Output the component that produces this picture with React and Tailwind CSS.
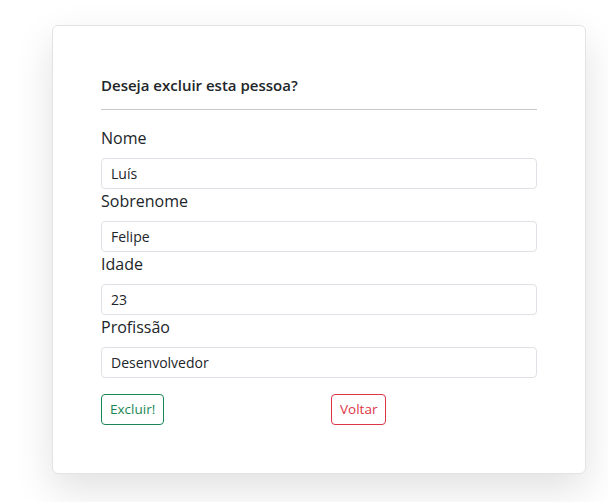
const fields = [
  { label: 'Nome', value: 'Luís' },
  { label: 'Sobrenome', value: 'Felipe' },
  { label: 'Idade', value: '23' },
  { label: 'Profissão', value: 'Desenvolvedor' },
];

export default function App() {
  return (
    <div className="min-h-[502px] bg-white pt-[25px] pl-[52px] text-[#212529]"
         style={{ fontFamily: '"Open Sans", "Liberation Sans", sans-serif' }}>
      <div className="w-[534px] rounded-md border border-[#e3e3e3] bg-white p-12
                      shadow-[0_16px_40px_rgba(0,0,0,0.12)]">
        <h5 className="text-[15px] font-semibold leading-[22px]">Deseja excluir esta pessoa?</h5>
        <hr className="mt-[13px] mb-4 border-t border-[#c8c8c8]" />

        {fields.map((f) => (
          <div key={f.label}>
            <label className="mb-2 block text-base leading-6">{f.label}</label>
            <input
              readOnly
              value={f.value}
              className="block h-[31px] w-full rounded border border-[#dee2e6] px-[9px] text-sm text-[#212529] outline-none"
            />
          </div>
        ))}

        <div className="mt-4 grid grid-cols-2 gap-6">
          <div>
            <button className="h-[31px] rounded border border-[#198754] px-2 text-[13.5px] text-[#198754]">
              Excluir!
            </button>
          </div>
          <div>
            <button className="h-[31px] rounded border border-[#dc3545] px-2 text-[13.5px] text-[#dc3545]">
              Voltar
            </button>
          </div>
        </div>
      </div>
    </div>
  );
}
